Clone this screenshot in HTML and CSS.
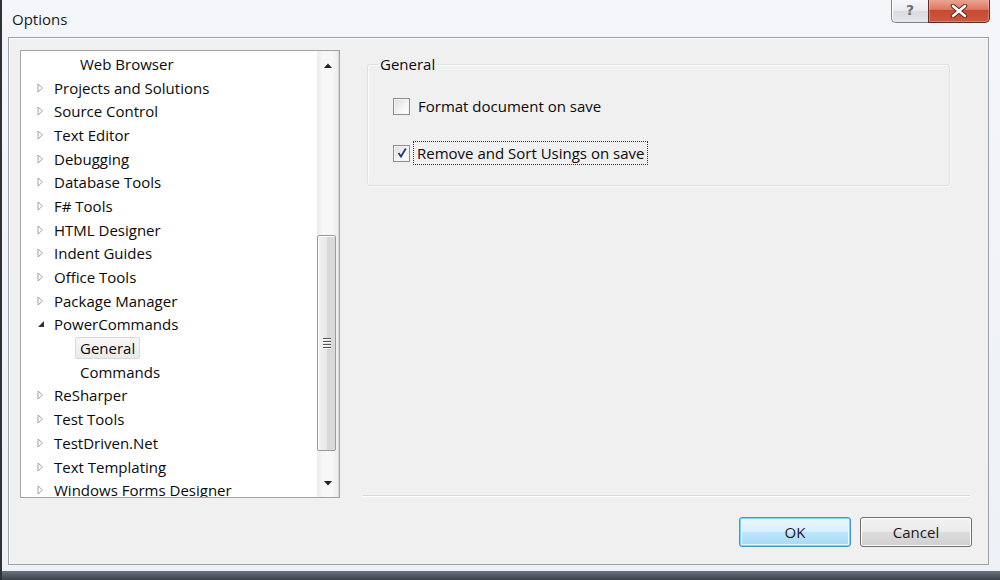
FILE: index.html
```html
<!DOCTYPE html>
<html>
<head>
<meta charset="utf-8">
<link rel="stylesheet" href="styles.css">
</head>
<body>
<div class="window">
  <div class="titlebar">
    <span class="title">Options</span>
    <div class="caption">
      <div class="cap-help">?</div>
      <div class="cap-close">
        <svg width="18" height="14" viewBox="0 0 18 14"><path d="M3 2 L15 12 M15 2 L3 12" stroke="#5a2a22" stroke-width="4.5" stroke-linecap="round"/><path d="M3 2 L15 12 M15 2 L3 12" stroke="#ffffff" stroke-width="2.6" stroke-linecap="round"/></svg>
      </div>
    </div>
  </div>
  <div class="client">
    <div class="main">
      <div class="tree">
        <ul class="tree-list">
          <li class="row lvl2"><span class="label">Web Browser</span></li>
          <li class="row"><span class="tw"><svg width="7" height="10" viewBox="0 0 7 10"><path d="M1 1 L5.5 5 L1 9 Z" fill="#fff" stroke="#a3a3a3"/></svg></span><span class="label">Projects and Solutions</span></li>
          <li class="row"><span class="tw"><svg width="7" height="10" viewBox="0 0 7 10"><path d="M1 1 L5.5 5 L1 9 Z" fill="#fff" stroke="#a3a3a3"/></svg></span><span class="label">Source Control</span></li>
          <li class="row"><span class="tw"><svg width="7" height="10" viewBox="0 0 7 10"><path d="M1 1 L5.5 5 L1 9 Z" fill="#fff" stroke="#a3a3a3"/></svg></span><span class="label">Text Editor</span></li>
          <li class="row"><span class="tw"><svg width="7" height="10" viewBox="0 0 7 10"><path d="M1 1 L5.5 5 L1 9 Z" fill="#fff" stroke="#a3a3a3"/></svg></span><span class="label">Debugging</span></li>
          <li class="row"><span class="tw"><svg width="7" height="10" viewBox="0 0 7 10"><path d="M1 1 L5.5 5 L1 9 Z" fill="#fff" stroke="#a3a3a3"/></svg></span><span class="label">Database Tools</span></li>
          <li class="row"><span class="tw"><svg width="7" height="10" viewBox="0 0 7 10"><path d="M1 1 L5.5 5 L1 9 Z" fill="#fff" stroke="#a3a3a3"/></svg></span><span class="label">F# Tools</span></li>
          <li class="row"><span class="tw"><svg width="7" height="10" viewBox="0 0 7 10"><path d="M1 1 L5.5 5 L1 9 Z" fill="#fff" stroke="#a3a3a3"/></svg></span><span class="label">HTML Designer</span></li>
          <li class="row"><span class="tw"><svg width="7" height="10" viewBox="0 0 7 10"><path d="M1 1 L5.5 5 L1 9 Z" fill="#fff" stroke="#a3a3a3"/></svg></span><span class="label">Indent Guides</span></li>
          <li class="row"><span class="tw"><svg width="7" height="10" viewBox="0 0 7 10"><path d="M1 1 L5.5 5 L1 9 Z" fill="#fff" stroke="#a3a3a3"/></svg></span><span class="label">Office Tools</span></li>
          <li class="row"><span class="tw"><svg width="7" height="10" viewBox="0 0 7 10"><path d="M1 1 L5.5 5 L1 9 Z" fill="#fff" stroke="#a3a3a3"/></svg></span><span class="label">Package Manager</span></li>
          <li class="row"><span class="tw"><svg width="8" height="8" viewBox="0 0 8 8"><path d="M7 1 L7 7 L1 7 Z" fill="#333"/></svg></span><span class="label">PowerCommands</span></li>
          <li class="row lvl2"><span class="label selected">General</span></li>
          <li class="row lvl2"><span class="label">Commands</span></li>
          <li class="row"><span class="tw"><svg width="7" height="10" viewBox="0 0 7 10"><path d="M1 1 L5.5 5 L1 9 Z" fill="#fff" stroke="#a3a3a3"/></svg></span><span class="label">ReSharper</span></li>
          <li class="row"><span class="tw"><svg width="7" height="10" viewBox="0 0 7 10"><path d="M1 1 L5.5 5 L1 9 Z" fill="#fff" stroke="#a3a3a3"/></svg></span><span class="label">Test Tools</span></li>
          <li class="row"><span class="tw"><svg width="7" height="10" viewBox="0 0 7 10"><path d="M1 1 L5.5 5 L1 9 Z" fill="#fff" stroke="#a3a3a3"/></svg></span><span class="label">TestDriven.Net</span></li>
          <li class="row"><span class="tw"><svg width="7" height="10" viewBox="0 0 7 10"><path d="M1 1 L5.5 5 L1 9 Z" fill="#fff" stroke="#a3a3a3"/></svg></span><span class="label">Text Templating</span></li>
          <li class="row"><span class="tw"><svg width="7" height="10" viewBox="0 0 7 10"><path d="M1 1 L5.5 5 L1 9 Z" fill="#fff" stroke="#a3a3a3"/></svg></span><span class="label">Windows Forms Designer</span></li>
        </ul>
        <div class="vscroll">
          <div class="sb-btn"><svg width="8" height="5" viewBox="0 0 8 5"><path d="M0 5 L4 0.5 L8 5 Z" fill="#222"/></svg></div>
          <div class="sb-track">
            <div class="thumb">
              <div class="grip"><i></i><i></i><i></i><i></i></div>
            </div>
          </div>
          <div class="sb-btn"><svg width="8" height="5" viewBox="0 0 8 5"><path d="M0 0 L8 0 L4 4.5 Z" fill="#222"/></svg></div>
        </div>
      </div>
      <div class="pane">
        <fieldset class="group">
          <legend>General</legend>
          <div class="check-row">
            <span class="checkbox"></span>
            <span class="check-label">Format document on save</span>
          </div>
          <div class="check-row second">
            <span class="checkbox checked"><svg width="12" height="12" viewBox="0 0 12 12"><path d="M2.5 6 L5 9.5 L9.8 1.5" fill="none" stroke="#1f3a8a" stroke-width="1.8"/></svg></span>
            <span class="check-label focus">Remove and Sort Usings on save</span>
          </div>
        </fieldset>
        <div class="sep"></div>
      </div>
    </div>
    <div class="buttons">
      <div class="btn default">OK</div>
      <div class="btn">Cancel</div>
    </div>
  </div>
  <div class="frame-gap"></div>
  <div class="frame-bottom"></div>
</div>
</body>
</html>
```
FILE: styles.css
```css
* { box-sizing: border-box; }
html, body { margin: 0; padding: 0; }
body {
  width: 1000px;
  height: 580px;
  overflow: hidden;
  font-family: "Open Sans", "Noto Sans", sans-serif;
  color: #0a0a0a;
  background: #eef2f6;
}
.window {
  width: 1000px;
  height: 580px;
  display: flex;
  flex-direction: column;
  border-left: 2px solid #2e333a;
  background: linear-gradient(#f4f6f9, #eef1f5);
}
.titlebar {
  height: 37px;
  flex: none;
  display: flex;
  justify-content: space-between;
  align-items: flex-start;
}
.title {
  font-size: 15px;
  line-height: 20px;
  margin-top: 9px;
  margin-left: 10px;
  color: #1a1a1a;
}
.caption {
  display: flex;
  margin-right: 10px;
  margin-top: -1px;
}
.cap-help {
  width: 37px;
  height: 24px;
  border: 1px solid #7d838c;
  border-top: none;
  border-right: none;
  border-radius: 0 0 0 5px;
  background: linear-gradient(#f7f8f9 0%, #e9ebee 50%, #d8dbdf 51%, #e4e6e9 100%);
  box-shadow: inset 1px 0 0 #fff;
  font-family: "DejaVu Sans", sans-serif;
  font-weight: bold;
  font-size: 14px;
  line-height: 22px;
  text-align: center;
  color: #6c7078;
}
.cap-close {
  width: 62px;
  height: 24px;
  border: 1px solid #6b2a1f;
  border-top: none;
  border-radius: 0 0 5px 0;
  background: linear-gradient(#eba894 0%, #dc7a63 45%, #c74a32 50%, #d2563c 100%);
  box-shadow: inset 0 0 0 1px rgba(255,255,255,0.25);
  display: flex;
  align-items: center;
  justify-content: center;
}
.client {
  flex: none;
  height: 528px;
  margin-left: 6px;
  margin-right: 11px;
  background: #f0f0f0;
  border: 1px solid #9aa2ad;
  box-shadow: inset 1px 1px 0 #ffffff;
  display: flex;
  flex-direction: column;
}
.main {
  display: flex;
  padding: 12px 18px 0 11px;
}
.tree {
  width: 320px;
  height: 448px;
  border: 1px solid #a3a3a3;
  background: #fff;
  display: flex;
  overflow: hidden;
}
.tree-list {
  list-style: none;
  margin: 0;
  padding: 1px 0 0 0;
  flex: 1;
  overflow: hidden;
  font-size: 15px;
}
.row {
  height: 23.7px;
  display: flex;
  align-items: center;
  padding-left: 16px;
  white-space: nowrap;
}
.tw {
  width: 17px;
  display: flex;
  align-items: center;
}
.lvl2 { padding-left: 54px; }
.label {
  padding: 0 5px;
  line-height: 22px;
  height: 22px;
}
.row .tw + .label { padding-left: 0; }
.selected {
  background: linear-gradient(#f6f6f6, #ebebeb);
  border: 1px solid #d9d9d9;
  border-radius: 2px;
  line-height: 20px;
  padding: 0 4px;
}
.vscroll {
  width: 22px;
  flex: none;
  display: flex;
  flex-direction: column;
  background: linear-gradient(90deg, #ececec, #f7f7f7 30%, #f7f7f7 70%, #ececec);
  border-right: 1px solid #d8d8d8;
}
.sb-btn {
  height: 28px;
  display: flex;
  align-items: center;
  justify-content: center;
  flex: none;
}
.sb-track {
  flex: 1;
}
.thumb {
  margin-top: 156px;
  height: 216px;
  margin-left: 0;
  margin-right: 2px;
  border: 1px solid #9a9a9a;
  border-radius: 2px;
  background: linear-gradient(90deg, #f3f3f3, #e6e6e6 50%, #d8d8d8 51%, #dadada);
  box-shadow: inset 1px 1px 0 #fff;
  display: flex;
  align-items: center;
  justify-content: center;
}
.grip {
  display: flex;
  flex-direction: column;
  gap: 1px;
}
.grip i {
  display: block;
  width: 8px;
  height: 1px;
  background: #555;
  border-bottom: 1px solid #fff;
  box-sizing: content-box;
}
.pane {
  flex: 1;
  margin-left: 23px;
  display: flex;
  flex-direction: column;
  height: 448px;
}
.group {
  margin: 4px 20px 0 4px;
  padding: 0 0 0 25px;
  height: 132px;
  border: 1px solid #dde2e6;
  border-radius: 3px;
  box-shadow: inset 1px 1px 0 #fafafa, 1px 1px 0 #fafafa;
  font-size: 15px;
}
.group legend {
  padding: 0 1px;
  margin-left: -14px;
  line-height: 20px;
  font-size: 15px;
}
.check-row {
  display: flex;
  align-items: center;
  height: 24px;
  margin-top: 20px;
}
.check-row.second {
  margin-top: 23px;
}
.checkbox {
  width: 17px;
  height: 17px;
  border: 1px solid #8e8f8f;
  background: linear-gradient(135deg, #dcdcdc, #f6f6f6 60%, #ffffff);
  box-shadow: inset 0 0 0 1px #f4f4f4;
  margin-right: 8px;
  display: flex;
  align-items: center;
  justify-content: center;
  flex: none;
}
.check-label {
  line-height: 20px;
}
.check-label.focus {
  margin-left: -5px;
  padding: 1px 3px 1px 3px;
  border: 1px dotted #333;
}
.sep {
  margin-top: auto;
  margin-bottom: 1px;
  height: 2px;
  border-top: 1px solid #d5d9dc;
  border-bottom: 1px solid #ffffff;
}
.buttons {
  display: flex;
  justify-content: flex-end;
  gap: 9px;
  padding: 19px 16px 0 0;
}
.btn {
  width: 112px;
  height: 30px;
  border: 1px solid #707070;
  border-radius: 3px;
  background: linear-gradient(#f2f2f2 0%, #ebebeb 49%, #dddddd 50%, #cfcfcf 100%);
  box-shadow: inset 0 0 0 1px #fbfbfb;
  font-size: 15px;
  line-height: 28px;
  text-align: center;
  color: #1a1a1a;
}
.btn.default {
  border-color: #3c9ad0;
  background: linear-gradient(#eaf6fd 0%, #d9f0fc 49%, #bee6fd 50%, #a7d9f5 100%);
  box-shadow: inset 0 0 0 1px #7fd1f1, inset 0 0 0 2px #e8f6fd;
}
.frame-gap { height: 6px; flex: none; }
.frame-bottom {
  flex: 1;
  background: linear-gradient(#6a7480, #3b4149);
}
```
